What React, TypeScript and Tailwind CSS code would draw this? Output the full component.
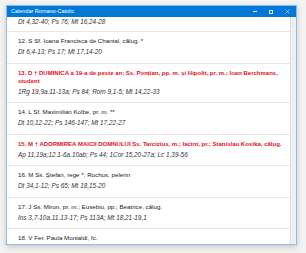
import React from "react";

type Entry = { title?: string; reading: string; red?: boolean };

const entries: Entry[] = [
  { title: "12. S Sf. Ioana Francisca de Chantal, călug. *", reading: "Dt 6,4-13; Ps 17; Mt 17,14-20" },
  {
    title: "13. D † DUMINICA a 19-a de peste an; Ss. Ponțian, pp. m. și Hipolit, pr. m.; Ioan Berchmans, student",
    reading: "1Rg 19,9a.11-13a; Ps 84; Rom 9,1-5; Mt 14,22-33",
    red: true,
  },
  { title: "14. L Sf. Maximilian Kolbe, pr. m. **", reading: "Dt 10,12-22; Ps 146-147; Mt 17,22-27" },
  {
    title: "15. M † ADORMIREA MAICII DOMNULUI Ss. Tarcizius, m.; Iacint, pr.; Stanislau Kostka, călug.",
    reading: "Ap 11,19a;12.1-6a.10ab; Ps 44; 1Cor 15,20-27a; Lc 1,39-56",
    red: true,
  },
  { title: "16. M Ss. Ştefan, rege *; Rochus, pelerin", reading: "Dt 34,1-12; Ps 65; Mt 18,15-20" },
  { title: "17. J Ss. Miron, pr. m.; Eusebiu, pp.; Beatrice, călug.", reading: "Ios 3,7-10a.11.13-17; Ps 113A; Mt 18,21-19,1" },
  { title: "18. V Fer. Paula Montaldi, fc.", reading: "" },
];

export default function App() {
  return (
    <div
      className="w-[306px] h-[253px] bg-[#f3f3f3] pl-[6px] pt-[5px] overflow-hidden"
      style={{ fontFamily: '"Liberation Sans", Arial, sans-serif' }}
    >
      <div className="w-[291px] h-[240px] flex flex-col border border-[#8fbbe6] bg-white shadow-[0_2px_6px_rgba(0,0,0,0.18)]">
        <div className="h-[11px] shrink-0 bg-[#0078d7] flex items-center text-white">
          <div className="pl-[4px] text-[5.5px] leading-none flex-1">Calendar Romano-Catolic</div>
          <div className="w-[16.5px] h-full flex items-center justify-center">
            <div className="w-[4px] h-[0.6px] bg-[#d8e8f8]" />
          </div>
          <div className="w-[16.5px] h-full flex items-center justify-center">
            <div className="w-[4px] h-[4px] border-[0.6px] border-[#d8e8f8]" />
          </div>
          <div className="w-[16.5px] h-full flex items-center justify-center">
            <svg width="5" height="5" viewBox="0 0 10 10">
              <path d="M1 1L9 9M9 1L1 9" stroke="#d8e8f8" strokeWidth="1.2" />
            </svg>
          </div>
        </div>
        <div className="flex-1 flex overflow-hidden">
          <div className="flex-1 overflow-hidden">
            <div className="pl-[11px] pt-0 pb-[5px] border-b border-[#e6e6e6]">
              <div className="text-[6.4px] leading-[9px] italic text-[#333]">Dt 4,32-40; Ps 76; Mt 16,24-28</div>
            </div>
            {entries.map((e, i) => (
              <div key={i} className="pl-[11px] pr-[8px] pt-[5px] pb-[6.5px] border-b border-[#e6e6e6]">
                <div
                  className={
                    e.red
                      ? "text-[6px] leading-[8px] text-[#e3101e] font-bold"
                      : "text-[6.2px] leading-[8px] text-[#222]"
                  }
                >
                  {e.title}
                </div>
                {e.reading && (
                  <div className="mt-[2px] text-[6.4px] leading-[9px] italic text-[#333]">{e.reading}</div>
                )}
              </div>
            ))}
          </div>
          <div className="w-[6px] shrink-0 bg-[#f0f0f0] border-l border-[#dcdcdc]" />
        </div>
      </div>
    </div>
  );
}
